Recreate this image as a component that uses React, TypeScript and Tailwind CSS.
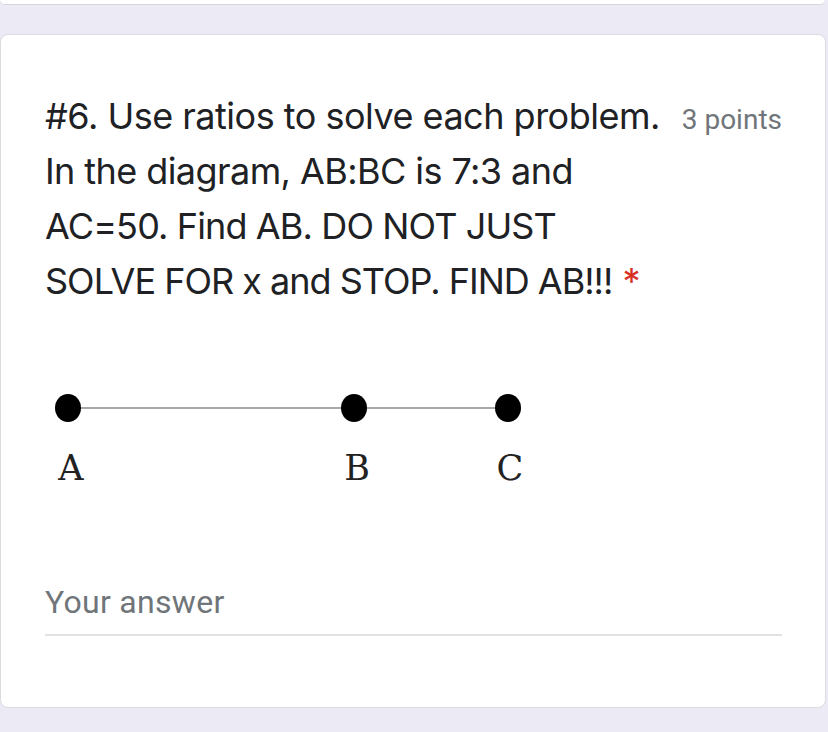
import React from 'react';

export default function App() {
  return (
    <div className="min-h-[732px] w-[828px] bg-[#eceaf5]">
      {/* bottom edge of the previous card */}
      <div className="h-[5px] w-[825px] rounded-b-[8px] border-b border-[#d6d6dc] bg-white" />

      <div className="mt-[29px] w-[826px] rounded-[8px] border border-[#dadce0] bg-white pb-[71px] pl-[44px] pr-[43px] pt-[54px]">
        {/* question title */}
        <div className="flex items-baseline justify-between">
          <div className="font-['Inter',sans-serif] text-[36px] leading-[55px] text-[#202124]">
            <span className="tracking-[-0.5px]">#6. Use ratios to solve each problem.</span>
            <br />
            <span className="tracking-[-0.57px]">In the diagram, AB:BC is 7:3 and</span>
            <br />
            <span className="tracking-[-0.87px]">AC=50. Find AB. DO NOT JUST</span>
            <br />
            <span className="tracking-[-1px]">SOLVE FOR x and STOP. FIND AB!!!</span>{' '}
            <span className="text-[#d93025]">*</span>
          </div>
          <div className="shrink-0 font-['Roboto',sans-serif] text-[28px] text-[#70757a]">3 points</div>
        </div>

        {/* diagram image */}
        <svg className="mt-[70px] block" width="560" height="120" viewBox="0 0 560 120">
          <line x1="23" y1="29" x2="463" y2="29" stroke="#a8a8a8" strokeWidth="2" />
          <ellipse cx="23" cy="29" rx="13" ry="14" fill="#000" />
          <ellipse cx="309" cy="29" rx="13" ry="14" fill="#000" />
          <ellipse cx="463" cy="29" rx="13" ry="14" fill="#000" />
          <g fontFamily="'DejaVu Serif', serif" fontSize="35" fill="#222" textAnchor="middle">
            <text x="26" y="101">A</text>
            <text x="312" y="101">B</text>
            <text x="465" y="101">C</text>
          </g>
        </svg>

        {/* short answer field */}
        <div className="mt-[85px] border-b-2 border-[#e2e2e4] pb-[14px] font-['Roboto',sans-serif] text-[32px] leading-[36px] tracking-[0.3px] text-[#70757a]">
          Your answer
        </div>
      </div>
    </div>
  );
}
